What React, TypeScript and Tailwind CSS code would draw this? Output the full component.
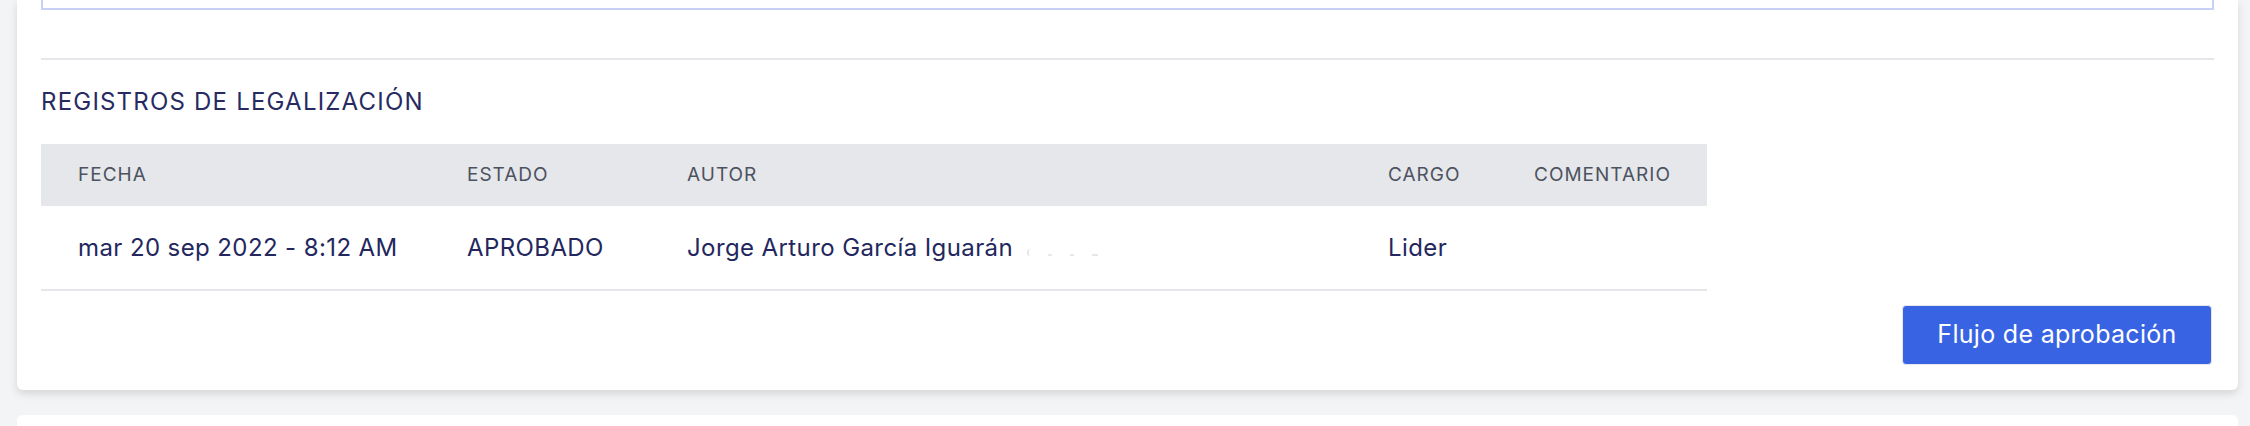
import React from 'react';

const rows = [
  {
    fecha: 'mar 20 sep 2022 - 8:12 AM',
    estado: 'APROBADO',
    autor: 'Jorge Arturo García Iguarán',
    cargo: 'Lider',
    comentario: '',
  },
];

const cols = [
  { label: 'FECHA', w: 'w-[389px]' },
  { label: 'ESTADO', w: 'w-[220px]' },
  { label: 'AUTOR', w: 'w-[701px]' },
  { label: 'CARGO', w: 'w-[146px]' },
  { label: 'COMENTARIO', w: 'w-[210px]' },
];

// faint marks left where a surname was blurred out
const Redacted = () => (
  <span className="ml-[14px] inline-flex items-end gap-[18px] align-baseline">
    <span className="h-[7px] w-[3px] rounded-l-full border-l-2 border-[#e5e7eb]" />
    <span className="h-[2px] w-[4px] bg-[#e8e9ee]" />
    <span className="h-[2px] w-[4px] bg-[#e8e9ee]" />
    <span className="h-[2px] w-[6px] bg-[#e5e7eb]" />
  </span>
);

export default function App() {
  return (
    <div
      className="h-[426px] overflow-hidden bg-[#f3f4f6] pl-[17px] pr-[12px]"
      style={{ fontFamily: 'Inter, "Noto Sans", sans-serif' }}
    >
      <div className="rounded-b-md bg-white px-6 pb-[25px] shadow-[0_4px_8px_rgba(0,0,0,0.12)]">
        {/* tail of the bordered box above */}
        <div className="h-[10px] border-2 border-t-0 border-[#c8d0f6]" />

        <div className="mt-[48px] h-[2px] bg-[#e5e7eb]" />

        <h2 className="mt-[26px] text-[24px] leading-[32px] font-normal tracking-[1.2px] text-[#272b62]">
          REGISTROS DE LEGALIZACIÓN
        </h2>

        <table className="mt-[26px] w-[1666px] table-fixed border-collapse">
          <thead>
            <tr className="h-[62px] bg-[#e5e7eb]">
              {cols.map((c) => (
                <th
                  key={c.label}
                  className={`${c.w} px-[37px] text-left text-[19px] font-normal tracking-[1px] text-[#4d5260]`}
                >
                  {c.label}
                </th>
              ))}
            </tr>
          </thead>
          <tbody>
            {rows.map((r, i) => (
              <tr key={i} className="h-[84px] border-b-2 border-[#e5e7eb] text-[24px] tracking-[0.4px] text-[#23275e]">
                <td className="px-[37px] whitespace-nowrap">{r.fecha}</td>
                <td className="px-[37px] whitespace-nowrap">{r.estado}</td>
                <td className="px-[37px] whitespace-nowrap">
                  {r.autor}
                  <Redacted />
                </td>
                <td className="px-[37px] whitespace-nowrap">{r.cargo}</td>
                <td className="px-[37px] whitespace-nowrap">{r.comentario}</td>
              </tr>
            ))}
          </tbody>
        </table>

        <div className="mt-[14px] flex justify-end pr-[2px]">
          <button className="h-[60px] w-[310px] rounded-[4px] border border-[#e5e7eb] bg-[#3863e3] text-[25px] tracking-[0.3px] text-white">
            Flujo de aprobación
          </button>
        </div>
      </div>

      <div className="mt-[25px] h-[40px] rounded-t-md bg-white" />
    </div>
  );
}
